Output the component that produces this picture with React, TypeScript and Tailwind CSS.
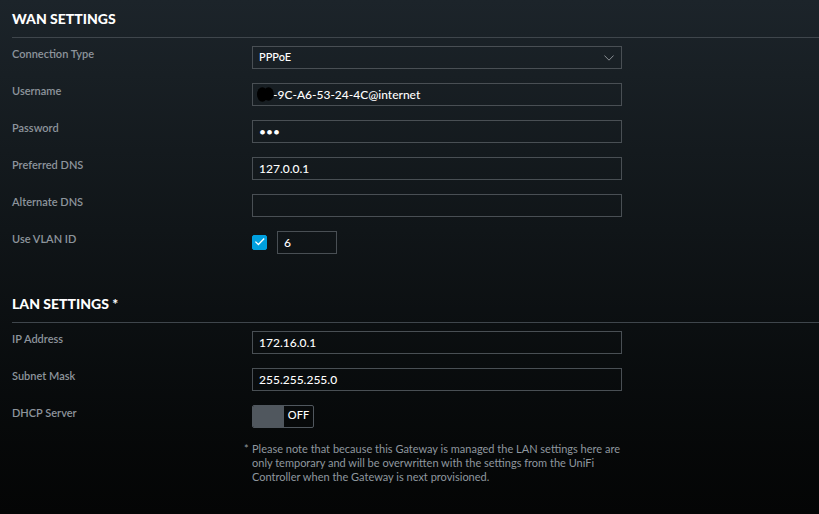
import { useState } from 'react';
import type { ReactNode } from 'react';

const field =
  'block h-[23px] w-full rounded-none border border-[#494f54] bg-transparent px-1.5 text-[12px] font-medium text-white outline-none focus:border-[#00a0df]';

function Section({ title, children }: { title: string; children: ReactNode }) {
  return (
    <section className="pb-[31px]">
      <h2 className="mb-2 border-b border-[#3f464c] pt-[11px] pb-2.5 text-[14px] leading-4 font-black text-white">{title}</h2>
      <div className="flex flex-col gap-3.5">{children}</div>
    </section>
  );
}

function Row({ id, label, children }: { id: string; label: string; children: ReactNode }) {
  return (
    <div className="flex items-start">
      <label htmlFor={id} className="w-60 shrink-0 text-[11px] leading-4 font-semibold text-[#8d949c]">
        {label}
      </label>
      <div className="w-[370px]">{children}</div>
    </div>
  );
}

export default function App() {
  const [form, setForm] = useState({
    type: 'PPPoE',
    username: '-9C-A6-53-24-4C@internet',
    password: 'abc',
    dns1: '127.0.0.1',
    dns2: '',
    vlan: '6',
    ip: '172.16.0.1',
    mask: '255.255.255.0'
  });
  const [useVlan, setUseVlan] = useState(true);
  const [dhcp, setDhcp] = useState(false);

  const bind = (key: keyof typeof form) => ({
    id: key,
    value: form[key],
    onChange: (e: { target: { value: string } }) => setForm({ ...form, [key]: e.target.value })
  });

  return (
    <main className="min-h-screen bg-linear-to-b from-[#1c242a] to-[#040505] pl-3 font-['Lato',sans-serif]">
      <Section title="WAN SETTINGS">
        <Row id="type" label="Connection Type">
          <div className="relative">
            <select {...bind('type')} className="block h-[23px] w-full appearance-none border border-[#494f54] bg-transparent px-1.5 text-[11px] font-medium text-white outline-none">
              <option className="bg-[#1c2229]">PPPoE</option>
              <option className="bg-[#1c2229]">DHCP</option>
            </select>
            <svg viewBox="0 0 10 6" className="pointer-events-none absolute top-[9px] right-2 h-1.5 w-2.5" fill="none" stroke="#8b9095">
              <path d="M.4.5 5 5.2 9.6.5" />
            </svg>
          </div>
        </Row>
        <Row id="username" label="Username">
          <div className="relative">
            <input type="text" {...bind('username')} className={`${field} pl-5`} />
            {/* hidden first octet */}
            <svg viewBox="0 0 18 16" className="pointer-events-none absolute top-1 left-1 h-4 w-[18px]" fill="#000">
              <ellipse cx="6.3" cy="7.5" rx="5.3" ry="7.3" />
              <ellipse cx="12.5" cy="7" rx="5.3" ry="6.8" />
            </svg>
          </div>
        </Row>
        <Row id="password" label="Password">
          <input type="password" {...bind('password')} className={field} />
        </Row>
        <Row id="dns1" label="Preferred DNS">
          <input type="text" {...bind('dns1')} className={field} />
        </Row>
        <Row id="dns2" label="Alternate DNS">
          <input type="text" {...bind('dns2')} className={field} />
        </Row>
        <Row id="useVlan" label="Use VLAN ID">
          <div className="flex items-center gap-2.5">
            <span className="relative flex">
              <input
                id="useVlan"
                type="checkbox"
                checked={useVlan}
                onChange={(e) => setUseVlan(e.target.checked)}
                className="size-[15px] appearance-none rounded-xs border border-[#494f54] checked:border-[#00a0df] checked:bg-[#00a0df]"
              />
              {useVlan && (
                <svg viewBox="0 0 15 15" className="pointer-events-none absolute inset-0" fill="none" stroke="#fff" strokeWidth="1.3">
                  <path d="M3.4 6.6 6.4 9.5 12.2 3.5" />
                </svg>
              )}
            </span>
            <div className="w-[60px]">
              <input type="text" aria-label="VLAN ID" {...bind('vlan')} className={field} />
            </div>
          </div>
        </Row>
      </Section>

      <Section title="LAN SETTINGS *">
        <Row id="ip" label="IP Address">
          <input type="text" {...bind('ip')} className={field} />
        </Row>
        <Row id="mask" label="Subnet Mask">
          <input type="text" {...bind('mask')} className={field} />
        </Row>
        <Row id="dhcp" label="DHCP Server">
          <button
            id="dhcp"
            type="button"
            role="switch"
            aria-checked={dhcp}
            onClick={() => setDhcp(!dhcp)}
            className={`flex h-[23px] w-[62px] items-stretch overflow-hidden rounded-xs border border-[#50575e] text-[11px] font-medium text-white ${dhcp ? 'flex-row-reverse' : ''}`}
          >
            <span className="w-[31px] bg-[#50575e]" />
            <span className="flex-1 text-center leading-[18px]">{dhcp ? 'ON' : 'OFF'}</span>
          </button>
        </Row>
        <div className="flex pl-[232px] text-[11px] leading-[14px] text-[#8f979f]">
          <span className="w-2 shrink-0">*</span>
          <p className="w-[374px]">
            Please note that because this Gateway is managed the LAN settings here are only temporary and will be overwritten with the settings from the UniFi
            Controller when the Gateway is next provisioned.
          </p>
        </div>
      </Section>
    </main>
  );
}
